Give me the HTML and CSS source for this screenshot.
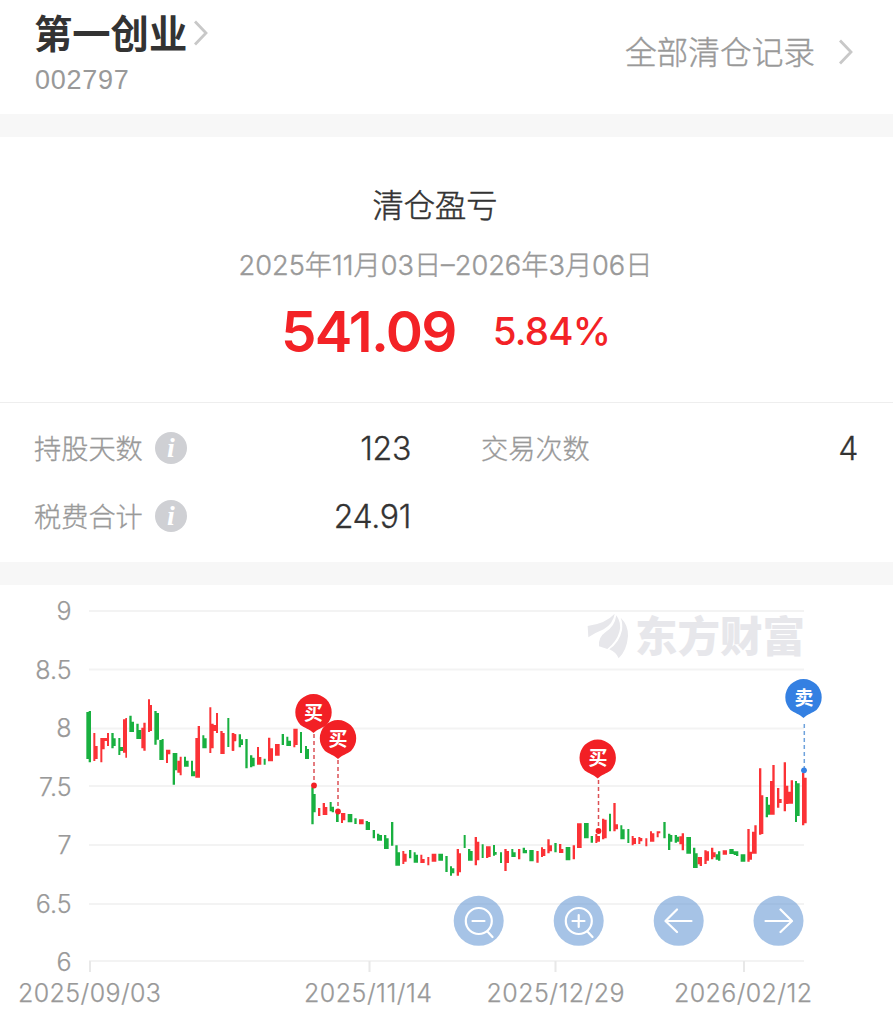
FILE: index.html
```html
<!DOCTYPE html>
<html lang="zh-CN">
<head>
<meta charset="utf-8">
<meta name="viewport" content="width=device-width">
<title>清仓盈亏</title>
<link rel="stylesheet" href="styles.css">
</head>
<body>
<header class="header">
  <div class="stock">
    <div class="stock-name">第一创业<svg class="chev-name" width="14" height="26" viewBox="0 0 14 26"><path d="M1 1.5L12 13L1 24.5"/></svg></div>
    <div class="stock-code">002797</div>
  </div>
  <div class="records"><span>全部清仓记录</span><svg width="14" height="26" viewBox="0 0 14 26"><path d="M1 1.5L12 13L1 24.5"/></svg></div>
</header>
<section class="summary">
  <h1 class="summary-title">清仓盈亏</h1>
  <div class="period">2025年11月03日–2026年3月06日</div>
  <div class="result"><span class="amount">541.09</span><span class="rate">5.84%</span></div>
</section>
<section class="stats">
  <div class="stat"><span class="label">持股天数</span><span class="info">i</span><span class="value">123</span></div>
  <div class="stat"><span class="label">交易次数</span><span class="value">4</span></div>
  <div class="stat"><span class="label">税费合计</span><span class="info">i</span><span class="value">24.91</span></div>
</section>
<main class="chart">
<svg width="893" height="439" viewBox="0 585 893 439">
  <g class="grid">
    <path d="M89 611H804M89 669.5H804M89 728.5H804M89 786H804M89 845H804M89 904H804M89 961H804"/>
    <path class="tick" d="M90 961V972M369.500 961V972M555.500 961V972M744 961V972"/>
  </g>
  <g class="watermark">
    <g transform="translate(570 600) scale(.33333)">
      <path d="M53 78Q108 70 134 41Q130 70 101 88Q76 98 55 112Z"/>
      <path d="M139 46Q156 70 148 96Q140 124 112 147L87 139Q84 112 107 96Q134 80 139 46Z"/>
      <path d="M152 53Q175 75 174 108Q171 150 146 175Q139 157 118 148Q148 128 156 91Q159 70 152 53Z"/>
    </g>
    <text x="635" y="652" textLength="170" lengthAdjust="spacingAndGlyphs">东方财富</text>
  </g>
  <g class="axis">
    <g text-anchor="end">
      <text x="71.500" y="620">9</text><text x="71.500" y="678.500">8.5</text><text x="71.500" y="737">8</text><text x="71.500" y="795.500">7.5</text><text x="71.500" y="854">7</text><text x="71.500" y="912.500">6.5</text><text x="71.500" y="970.500">6</text>
    </g>
    <text x="18" y="1001.500" textLength="143">2025/09/03</text>
    <text x="304" y="1001.500" textLength="128">2025/11/14</text>
    <text x="486.500" y="1001.500" textLength="138">2025/12/29</text>
    <text x="674" y="1001.500" textLength="138">2026/02/12</text>
  </g>
  <g transform="translate(80 690) scale(.33333)">
    <path class="down" d="M19 66H33V207H19zM26 63H33V217H26zM94 129H101V175H94zM101 145H107V168H101zM115 144H121V195H115zM121 171H129V183H121zM148 77H155V126H148zM155 95H162V126H155zM169 101H176V147H169zM176 120H184V147H176zM223 63H230V164H223zM230 69H237V149H230zM238 150H251V210H238zM245 147H251V210H245zM278 189H285V284H278zM285 189H292V241H285zM312 200H318V230H312zM318 212H326V230H318zM333 212H339V259H333zM339 244H346V259H339zM367 136H373V175H367zM373 145H380V175H373zM442 84H448V171H442z"/>
    <path class="up" d="M40 129H46V213H40zM46 168H53V207H46zM61 144H67V217H61zM67 144H87V153H67zM67 153H74V178H67zM81 129H87V168H81zM129 88H141V188H129zM136 84H141V203H136zM184 113H190V175H184zM190 98H197V182H190zM204 28H210V126H204zM210 45H216V123H210zM258 179H271V193H258zM258 179H264V219H258zM292 212H299V248H292zM299 200H305V256H299zM346 144H360V263H346zM353 108H360V263H353zM388 52H394V189H388zM394 101H401V175H394zM401 105H408V123H401zM408 69H414V129H408zM421 123H428V192H421zM428 129H434V192H428zM456 129H463V182H456zM463 133H469V152H463z"/>
  </g>
  <g transform="translate(230 680) scale(.33333)">
    <path class="down" d="M26 163H33V202H26zM33 178H39V195H33zM46 177H53V265H46zM60 226H67V262H60zM67 233H74V259H67zM101 236H107V254H101zM155 162H162V195H155zM169 170H175V198H169zM175 182H183V198H175zM210 156H216V219H210zM225 198H231V237H225zM231 207H237V237H231zM244 322H251V433H244zM251 342H257V397H251zM299 366H305V394H299zM305 380H312V397H305zM318 397H326V426H318zM353 402H367V427H353zM373 415H380V432H373zM407 423H414V450H407zM414 426H420V450H414z"/>
    <path class="up" d="M5 160H12V212H5zM12 163H18V184H12zM81 201H87V254H81zM87 231H94V254H87zM114 173H121V244H114zM121 205H129V244H121zM135 192H149V227H135zM190 146H203V195H190zM190 146H196V202H190zM264 384H271V408H264zM278 369H285V405H278zM285 381H292V405H285zM333 399H346V421H333zM333 399H339V429H333zM387 418H401V433H387z"/>
  </g>
  <g transform="translate(350 780) scale(.33333)">
    <path class="down" d="M68 150H75V175H68zM81 161H88V182H81zM88 165H96V182H88zM102 165H109V207H102zM109 175H116V207H109zM123 126H130V197H123zM136 196H143V257H136zM143 217H150V257H143zM177 210H184V235H177zM191 217H197V248H191zM197 224H204V248H197zM265 221H279V242H265zM286 228H293V276H286zM300 259H306V287H300zM306 265H313V280H306zM341 165H347V204H341zM354 207H361V242H354zM361 213H368V242H361zM395 193H401V234H395zM429 195H435V227H429zM435 216H440V224H435zM450 217H456V249H450zM484 207H490V231H484zM490 217H497V231H490zM518 203H525V220H518zM525 210H531V220H525z"/>
    <path class="up" d="M157 213H163V252H157zM163 221H170V245H163zM211 224H217V249H211zM217 237H224V249H217zM232 231H238V256H232zM245 221H259V245H245zM320 207H327V287H320zM327 220H333V277H327zM374 171H381V256H374zM381 185H388V241H381zM408 199H422V231H408zM408 199H415V234H408zM463 207H470V273H463zM470 213H477V249H470zM504 207H511V238H504z"/>
  </g>
  <g transform="translate(500 730) scale(.33333)">
    <path class="down" d="M88 360H101V394H88zM163 339H170V367H163zM197 351H211V391H197zM252 279H266V325H252zM272 318H279V338H272zM327 251H333V304H327zM361 286H367V328H361zM367 298H374V328H367zM382 297H388V339H382zM490 276H497V325H490zM504 311H511V360H504zM511 315H517V335H511zM524 315H531V338H524zM531 320H538V335H531z"/>
    <path class="up" d="M109 363H116V398H109zM123 352H129V381H123zM129 357H136V378H129zM142 328H149V370H142zM149 346H156V364H149zM177 342H184V369H177zM184 357H190V369H184zM218 346H225V388H218zM231 280H245V354H231zM286 312H292V339H286zM292 318H300V335H292zM306 266H313V328H306zM313 269H320V325H313zM340 219H347V304H340zM347 283H354V298H347zM395 318H401V346H395zM401 324H408V342H401zM415 321H421V342H415zM421 324H427V334H421zM436 325H442V349H436zM450 304H456V335H450zM456 310H463V335H456zM470 304H481V310H470zM470 304H476V322H470z"/>
  </g>
  <g transform="translate(660 670) scale(.33333)">
    <path class="down" d="M79 501H93V551H79zM99 533H106V594H99zM106 550H113V594H106zM167 553H174V569H167zM174 544H181V572H174zM208 537H221V552H208zM221 544H228V555H221zM228 544H235V558H228zM242 553H256V575H242zM317 381H324V442H317zM324 404H330V434H324zM405 333H411V456H405zM411 340H419V438H411z"/>
    <path class="up" d="M58 499H65V523H58zM65 490H72V541H65zM113 561H126V583H113zM119 561H126V588H119zM133 541H140V582H133zM140 544H147V572H140zM153 533H160V568H153zM160 547H167V562H160zM188 541H201V554H188zM262 477H269V575H262zM269 545H276V569H269zM276 485H290V551H276zM283 466H290V551H283zM297 295H304V494H297zM304 376H310V492H304zM330 333H344V434H330zM337 285H344V434H337zM351 354H358V413H351zM358 387H365V399H358zM371 277H378V424H371zM378 347H385V402H378zM385 365H399V401H385zM392 331H399V401H392zM426 309H433V466H426zM433 323H440V460H433z"/>
  </g>
  <defs><path id="pin" d="M0 20.500C-4 16.500-9 15.500-13 12.500A18.200 18.200 0 1 1 13 12.500C9 15.500 4 16.500 0 20.500Z"/></defs>
  <g class="marks">
    <g class="buy">
      <path class="lead" d="M314 734V784M338 760V809M598.500 780V829"/>
      <circle cx="314" cy="785.500" r="2.900"/><circle cx="338" cy="811.500" r="2.900"/><circle cx="598.500" cy="831" r="2.900"/>
      <use href="#pin" x="313.500" y="712.500"/><text x="313.500" y="719.500">买</text>
      <use href="#pin" x="338" y="738.500"/><text x="338" y="745.500">买</text>
      <use href="#pin" x="597.700" y="758"/><text x="598" y="765">买</text>
    </g>
    <g class="sell">
      <path class="lead" d="M804.300 724V768"/><circle cx="804" cy="770.300" r="2.900"/>
      <use href="#pin" x="803.500" y="697.500"/><text x="804" y="704.500">卖</text>
    </g>
  </g>
  <g class="controls">
    <circle cx="478.700" cy="920.800" r="25"/><circle cx="578.700" cy="920.800" r="25"/><circle cx="678.700" cy="920.800" r="25"/><circle cx="778.500" cy="920.800" r="25"/>
    <path d="M491.800 921A13 13 0 1 1 465.800 921A13 13 0 1 1 491.800 921ZM487 931L492.500 937M472.500 921H484.500M591.800 921A13 13 0 1 1 565.800 921A13 13 0 1 1 591.800 921ZM587 931L592.500 937M572.500 921H584.500M578.700 915V927M691.500 921H665.500M677 909.500L665.500 921L677 932M765.500 921H791.500M780.500 909.500L792 921L780.500 932"/>
  </g>
</svg>
</main>
</body>
</html>
```

FILE: styles.css
```css
* { box-sizing: border-box; }
body { margin: 0; width: 893px; height: 1024px; overflow: hidden; background: #fff; color: #333; font-family: Inter, "Noto Sans CJK SC", sans-serif; }
.header { height: 137px; border-bottom: 23px solid #f7f7f7; padding: 0 40px 0 34px; display: flex; justify-content: space-between; }
.stock-name { display: flex; align-items: center; height: 56px; padding-top: 7px; font: 700 38.300px/45px "Noto Sans CJK SC", sans-serif; }
.header svg { fill: none; stroke: #c8c8c8; stroke-width: 2.8; }
.stock-name .chev-name { margin: 3px 0 0 7px; }
.stock-code { margin-top: 8px; padding-left: 1px; font: 27px/32px "Liberation Sans", sans-serif; letter-spacing: .75px; color: #999; }
.records { display: flex; align-items: center; height: 104px; gap: 24px; color: #999; font: 300 31.700px/40px "Noto Sans CJK SC", sans-serif; -webkit-text-stroke: .4px #999; }
.records span { padding-bottom: 4px; }
.summary { height: 266px; border-bottom: 1px solid #eee; display: flex; flex-direction: column; align-items: center; padding-top: 47px; }
.summary-title { margin: 0 23px 0 0; font: 300 31.300px/40px "Noto Sans CJK SC", sans-serif; -webkit-text-stroke: .5px #333; }
.period { margin: 22px 2px 0 0; line-height: 40px; font-size: 27.200px; font-weight: 300; color: #999; white-space: nowrap; -webkit-text-stroke: .4px #999; }
.result { display: flex; align-items: baseline; gap: 37px; height: 80px; margin: 6px 2px 0 0; line-height: 80px; color: #f32226; white-space: nowrap; }
.amount { font-size: 56.500px; font-weight: 600; letter-spacing: -1.700px; }
.rate { font-size: 38.500px; font-weight: 550; letter-spacing: -.8px; transform: translateY(-7px); }
.stats { height: 182px; border-bottom: 23px solid #f7f7f7; padding: 11px 35px 0 34px; display: grid; grid-template-columns: 377px 377px; column-gap: 70px; grid-auto-rows: 68px; }
.stat { display: flex; align-items: center; }
.label { padding-bottom: 2px; font: 300 27.200px/40px "Noto Sans CJK SC", sans-serif; color: #999; -webkit-text-stroke: .3px #999; }
.info { display: flex; justify-content: center; width: 32px; height: 32px; margin-left: 12px; border-radius: 50%; background: #cfd0d4; color: #fff; font: italic 700 28px/32px "Liberation Serif", serif; }
.value { margin-left: auto; padding-top: 1px; font-size: 32px; font-weight: 350; letter-spacing: -.3px; -webkit-text-stroke: .3px #333; }
.chart svg { display: block; }
.grid path { fill: none; stroke: #f3f3f3; stroke-width: 2; }
.grid .tick { stroke: #e8e8e8; }
.watermark { fill: #e7e7eb; font: 900 42px "Noto Sans CJK SC", sans-serif; }
.axis { fill: #999; stroke: #999; stroke-width: .25px; font: 350 25px Inter, sans-serif; }
.up { fill: #fb3236; }
.down { fill: #19b040; }
.marks { font: 700 19px "Noto Sans CJK SC", sans-serif; text-anchor: middle; }
.marks text { fill: #fff; }
.lead { stroke-width: 1.500; stroke-dasharray: 4 3; }
.buy { fill: #f22025; }
.buy .lead { stroke: #dc5055; }
.sell { fill: #3480e2; }
.sell .lead { stroke: #6fa2dc; }
.controls circle { fill: #5c92d2; fill-opacity: .55; }
.controls path { fill: none; stroke: #fff; stroke-width: 2.200; stroke-linecap: round; stroke-linejoin: round; }
```
